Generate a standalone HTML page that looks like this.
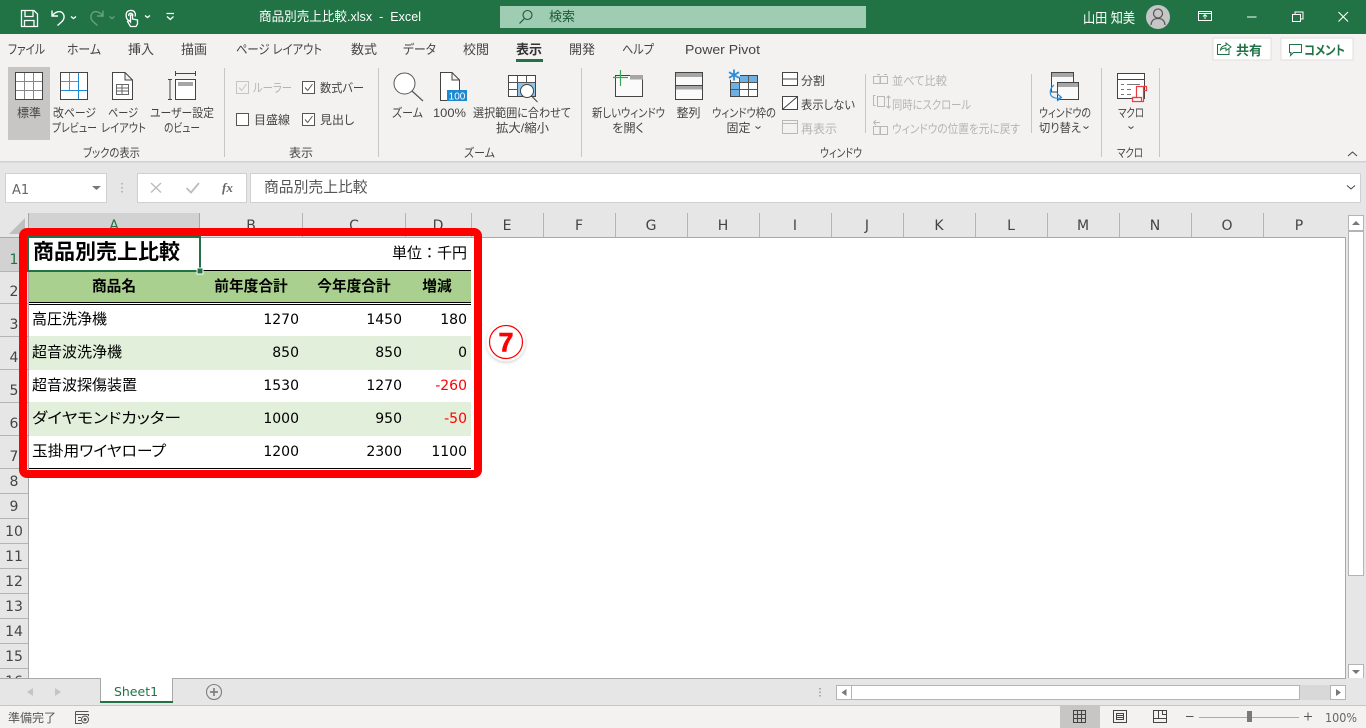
<!DOCTYPE html>
<html lang="ja"><head><meta charset="utf-8"><title>商品別売上比較.xlsx - Excel</title>
<style>
html,body{margin:0;padding:0;width:1366px;height:728px;overflow:hidden;background:#fff}
svg{display:block;position:absolute;left:0;top:0}
text{font-family:"Liberation Sans","Noto Sans CJK JP",sans-serif;font-feature-settings:"palt";fill:#444}
.j{font-size:12px}
.m{text-anchor:middle}
.e{text-anchor:end}
.t{font-size:13px;fill:#444}
.g{fill:#b4b4b4}
.hd{font-family:"DejaVu Sans","Noto Sans CJK JP",sans-serif;font-size:14px;fill:#444;text-anchor:middle}
.rn{font-family:"DejaVu Sans",sans-serif;font-size:14px;fill:#444;text-anchor:middle}
.n{font-family:"DejaVu Sans",sans-serif;font-size:14px;fill:#000;text-anchor:end}
.b{font-size:15px;fill:#000;font-feature-settings:"normal"}
.p{font-size:15px;fill:#000}
.h{font-size:14.7px;font-weight:bold;fill:#000;text-anchor:middle;font-feature-settings:"normal"}
.s{fill:none;stroke:#444;stroke-width:1}
.w{fill:none;stroke:#fff;stroke-width:1.3}
.lg{fill:none;stroke:#b8b8b8;stroke-width:1}
</style></head><body>
<svg width="1366" height="728" viewBox="0 0 1366 728" xmlns="http://www.w3.org/2000/svg">
<defs><filter id="gl" x="-40%" y="-40%" width="180%" height="180%"><feDropShadow dx="0" dy="1" stdDeviation="1.5" flood-color="#000" flood-opacity=".22"/></filter></defs>
<!-- backgrounds -->
<rect width="1366" height="728" fill="#e6e6e6"/>
<rect x="0" y="0" width="1366" height="34" fill="#217346"/>
<rect x="0" y="34" width="1366" height="127" fill="#f3f2f1"/>
<rect x="0" y="161" width="1366" height="1" fill="#d0d0d0"/><rect x="0" y="162" width="1366" height="1" fill="#dcdcdc"/>
<!-- title bar -->
<g class="w">
<path d="M21.5 10.5H34L37.5 14V26.5H21.5Z"/><path d="M25 10.5V16.5H33V10.5M24.5 26.5V20.5H34V26.5"/>
<path d="M52 10.5V16H58M52.5 15.5C55 12 59.5 10.5 62 12.5 65 15 64.5 19 62 21.5L57.5 25.5" stroke-width="1.4"/>
<path d="M71 16.5L73.5 18.5 76 16.5"/>
<g opacity=".32"><path d="M103 10.5V16H97M102.500 15.5C100 12 95.500 10.500 93 12.5 90 15 90.500 19 93 21.5L97.500 25.5" stroke-width="1.4"/><path d="M109.500 16.500L112 18.500 114.500 16.500"/></g>
<path d="M129 21C125 18 125 11 130 10.500 135 10 136 14 135 16.500M129 16C127.500 13 132.500 12 133 15.500M130.500 26.500L127.500 21.500 129 20.500 130.500 22V15H132.500V19L137.500 20V24L136 26.500Z"/>
<path d="M145 15.500L147.500 17.500 150 15.500"/>
<path d="M166.500 13.500H174M167 16.500L170.300 19.500 173.500 16.500"/>
</g>
<text x="259" y="21" class="t" style="fill:#fff;font-size:13px" xml:space="preserve" textLength="162" lengthAdjust="spacingAndGlyphs">商品別売上比較.xlsx  -  Excel</text>
<rect x="500" y="6" width="366" height="22" fill="#9fcdb3"/>
<circle cx="527.500" cy="15" r="4.500" fill="none" stroke="#1c5a38" stroke-width="1.1"/><path d="M524 19L519.500 23.500" stroke="#1c5a38" stroke-width="1.200"/>
<text x="549" y="21" style="font-size:13px;fill:#1c5a38">検索</text>
<text x="1083" y="23" style="font-size:14px;fill:#fff" xml:space="preserve" textLength="52" lengthAdjust="spacingAndGlyphs">山田 知美</text>
<circle cx="1158" cy="17" r="12" fill="#c6c6c6"/>
<circle cx="1158" cy="13.500" r="4.500" fill="none" stroke="#555" stroke-width="1.200"/><path d="M1151 25C1151.500 20 1154 18.500 1158 18.500 1162 18.500 1164.500 20 1165 25" fill="none" stroke="#555" stroke-width="1.200"/>
<g class="w" stroke-width="1">
<path d="M1198.500 11.500H1211.500V20.500H1198.500ZM1198.500 13.500H1211.500M1205 19V15M1203 16.500L1205 14.700 1207 16.500" style="stroke-width:1"/>
<path d="M1247 17H1256.500" style="stroke-width:1"/>
<path d="M1292.500 14.500H1300.500V21.500H1292.500ZM1295 14.500V12H1303V19H1300.500" style="stroke-width:1"/>
<path d="M1338.500 12L1348 21.500M1348 12L1338.500 21.500" style="stroke-width:1.100"/>
</g>
<!-- tabs -->
<g class="t">
<text x="8" y="54" class="t" textLength="37" lengthAdjust="spacingAndGlyphs">ファイル</text><text x="67" y="54" class="t" textLength="34" lengthAdjust="spacingAndGlyphs">ホーム</text><text x="128" y="54" class="t">挿入</text><text x="181" y="54" class="t">描画</text><text x="236" y="54" class="t" xml:space="preserve" textLength="86" lengthAdjust="spacingAndGlyphs">ページ レイアウト</text><text x="351" y="54" class="t">数式</text><text x="403" y="54" class="t" textLength="33" lengthAdjust="spacingAndGlyphs">データ</text><text x="463" y="54" class="t">校閲</text><text x="516" y="54" class="t" style="font-weight:bold;fill:#333">表示</text><text x="569" y="54" class="t">開発</text><text x="622" y="54" class="t" textLength="32" lengthAdjust="spacingAndGlyphs">ヘルプ</text><text x="685" y="54" class="t" textLength="75" lengthAdjust="spacingAndGlyphs">Power Pivot</text>
</g>
<rect x="516" y="59" width="27" height="3" fill="#217346"/>
<!-- share comment -->
<rect x="1213" y="38" width="58" height="22" fill="#fff" stroke="#e1dfdd" stroke-width="1"/>
<rect x="1281" y="38" width="72" height="22" fill="#fff" stroke="#e1dfdd" stroke-width="1"/>
<path d="M1221 44.500H1217.500V54.500H1229V49M1220.500 50C1221 46.500 1224 45.500 1226 45.500V43L1231 47 1226 50.500V48C1224 48 1222 48.500 1220.500 50Z" fill="none" stroke="#217346" stroke-width="1"/>
<text x="1236" y="55" style="font-size:13px;font-weight:bold;fill:#217346">共有</text>
<path d="M1289.500 44.500H1301.500V52.500H1293.500L1290.500 55.500 1291 52.500H1289.500Z" fill="none" stroke="#217346" stroke-width="1"/>
<text x="1304" y="55" style="font-size:13px;font-weight:bold;fill:#217346" textLength="41" lengthAdjust="spacingAndGlyphs">コメント</text>
<!-- separators -->
<g fill="#c8c6c4"><rect x="224" y="68" width="1" height="89"/><rect x="378" y="68" width="1" height="89"/><rect x="581" y="68" width="1" height="89"/><rect x="1101" y="68" width="1" height="89"/><rect x="1159" y="68" width="1" height="89"/><rect x="865" y="74" width="1" height="59"/><rect x="1031" y="74" width="1" height="59"/></g>
<!-- workbook views -->
<rect x="8" y="67" width="42" height="73" fill="#c8c6c4"/>
<path d="M15.500 72.500H42.500V99.500H15.500Z" fill="#fff" stroke="#444"/><path d="M24.500 73V99M33.500 73V99M16 81.500H42M16 90.500H42" stroke="#888" fill="none"/>
<path d="M60.500 72.500H87.500V99.500H60.500Z" fill="#fff" stroke="#444"/><path d="M69.500 73V90M61 81.500H78" stroke="#888" fill="none"/><path d="M78.500 73V99M61 90.500H87" stroke="#1e8ad6" fill="none"/>
<path d="M112.500 72.500H125L132.500 80V99.500H112.500ZM125 72.500V80H132.500" fill="#fff" stroke="#444"/><path d="M116.500 84.500H128.500V94.500H116.500ZM116.500 88H128.500M116.500 91H128.500M122 84.500V94.500" fill="none" stroke="#666"/>
<path d="M175.500 79.500H195.500V99.500H175.500Z" fill="#fff" stroke="#444"/><rect x="178" y="82" width="15" height="4" fill="#a6a6a6"/>
<path d="M175.500 73.500H195.500M175.500 71V76M195.500 71V76M170 79.500V99.500M168 79.500H172M168 99.500H172" fill="none" stroke="#444"/>
<g class="j"><text x="29" y="117" class="j m">標準</text><text x="74.500" y="117" class="j m" textLength="43" lengthAdjust="spacingAndGlyphs">改ページ</text><text x="74.500" y="132" class="j m" textLength="45" lengthAdjust="spacingAndGlyphs">プレビュー</text><text x="123" y="117" class="j m" textLength="30" lengthAdjust="spacingAndGlyphs">ページ</text><text x="123.500" y="132" class="j m" textLength="45" lengthAdjust="spacingAndGlyphs">レイアウト</text><text x="182" y="117" class="j m" textLength="64" lengthAdjust="spacingAndGlyphs">ユーザー設定</text><text x="182" y="132" class="j m" textLength="36" lengthAdjust="spacingAndGlyphs">のビュー</text><text x="111.500" y="157" class="j m" textLength="57" lengthAdjust="spacingAndGlyphs">ブックの表示</text></g>
<!-- show -->
<rect x="236.500" y="81.500" width="12" height="12" fill="none" stroke="#c4c4c4"/><path d="M239 87.500L241.700 90.500 246.500 84" fill="none" stroke="#c4c4c4"/>
<rect x="302.500" y="81.500" width="12" height="12" fill="#fff" stroke="#555"/><path d="M305 87.500L307.700 90.500 312.500 84" fill="none" stroke="#555"/>
<rect x="236.500" y="113.500" width="12" height="12" fill="#fff" stroke="#555"/>
<rect x="302.500" y="113.500" width="12" height="12" fill="#fff" stroke="#555"/><path d="M305 119.500L307.700 122.500 312.500 116" fill="none" stroke="#555"/>
<text x="253" y="92" class="j g" textLength="39" lengthAdjust="spacingAndGlyphs">ルーラー</text><text x="320" y="92" class="j" textLength="44" lengthAdjust="spacingAndGlyphs">数式バー</text><text x="254" y="124" class="j">目盛線</text><text x="320" y="124" class="j">見出し</text>
<text x="301" y="157" class="j m">表示</text>
<!-- zoom -->
<circle cx="404.500" cy="83.500" r="10.500" fill="#fff" stroke="#555"/><path d="M412 91L423 101" stroke="#555" fill="none" stroke-width="1.200"/>
<path d="M440.500 72.500H452L459.500 80V100.500H440.500ZM452 72.500V80H459.500" fill="#fff" stroke="#444"/>
<rect x="447" y="90" width="20" height="11" fill="#1e88d0"/><text x="457" y="99.500" class="m" style="font-size:10px;fill:#fff">100</text>
<text x="407.500" y="117" class="j m" textLength="31" lengthAdjust="spacingAndGlyphs">ズーム</text><text x="449.500" y="117" class="j m" textLength="33" lengthAdjust="spacingAndGlyphs">100%</text>
<path d="M508.500 75.500H535.500V96.500H508.500Z" fill="#fff" stroke="#444"/><rect x="517" y="83" width="18" height="13" fill="#8fc3ea"/><path d="M517.500 76V96M526.500 76V83M509 82.500H535M509 89.500H517" stroke="#555" fill="none"/>
<circle cx="527" cy="91" r="6.500" fill="#fff" stroke="#444"/><path d="M531.500 96L537.500 102" stroke="#444" fill="none"/>
<text x="522" y="117" class="j m" textLength="98" lengthAdjust="spacingAndGlyphs">選択範囲に合わせて</text><text x="522.500" y="132" class="j m" textLength="53" lengthAdjust="spacingAndGlyphs">拡大/縮小</text>
<text x="479.500" y="157" class="j m" textLength="31" lengthAdjust="spacingAndGlyphs">ズーム</text>
<!-- window -->
<path d="M615.500 75.500H642.500V96.500H615.500Z" fill="#fafafa" stroke="#444"/><rect x="630" y="75" width="13" height="4.500" fill="#a6a6a6"/>
<path d="M613 77.500H628M620.500 70V86" stroke="#3aa655" fill="none" stroke-width="1.200"/>
<text x="628.500" y="117" class="j m" textLength="73" lengthAdjust="spacingAndGlyphs">新しいウィンドウ</text><text x="628" y="132" class="j m" textLength="32" lengthAdjust="spacingAndGlyphs">を開く</text>
<path d="M675.500 72.500H702.500V99.500H675.500Z" fill="#fafafa" stroke="#444"/><rect x="676" y="73" width="26" height="4" fill="#a6a6a6"/><rect x="676" y="85" width="26" height="4.500" fill="#a6a6a6"/><path d="M676 85.500H702" stroke="#444"/>
<text x="688.500" y="117" class="j m">整列</text>
<path d="M730.500 75.500H757.500V96.500H730.500Z" fill="#fff" stroke="#444"/><rect x="739" y="76" width="18" height="6.500" fill="#6cb0e4"/><rect x="731" y="82.500" width="8" height="13.500" fill="#6cb0e4"/><path d="M739.500 76V96M748.500 76V96M731 82.500H757M731 89.500H757" stroke="#555" fill="none"/>
<circle cx="734" cy="75" r="6" fill="#f3f2f1"/>
<path d="M734 69.500V80.500M729 72.200L739 77.800M739 72.200L729 77.800" stroke="#2e8fd8" stroke-width="1.800" fill="none"/>
<text x="744" y="117" class="j m" textLength="64" lengthAdjust="spacingAndGlyphs">ウィンドウ枠の</text><text x="738.500" y="132" class="j m">固定</text><path d="M755.500 126.500L758 128.500 760.500 126.500" class="s"/>
<path d="M782.500 72.500H797.500V85.500H782.500ZM783 79H797" fill="#fff" stroke="#444"/>
<path d="M782.500 96.500H797.500V109.500H782.500ZM783 109L797 97" fill="#fff" stroke="#444"/>
<path d="M782.500 120.500H797.500V133.500H782.500ZM783 123.500H797" fill="none" stroke="#b8b8b8"/>
<text x="801" y="85" class="j">分割</text><text x="801" y="109" class="j" textLength="54" lengthAdjust="spacingAndGlyphs">表示しない</text><text x="801" y="133" class="j g">再表示</text>
<text x="841" y="157" class="j m" textLength="42" lengthAdjust="spacingAndGlyphs">ウィンドウ</text>
<path class="lg" d="M873.500 76.500H880V83.500H873.500ZM880.500 76.500H887.500V83.500H880.500ZM877 74.500H880M884 74.500H887"/>
<path class="lg" d="M875.500 95.500H873.500V105.500H875.500M877.500 96.500H884.500V106.500H877.500ZM888.500 96V108M886.500 98L888.500 96 890.500 98M886.500 106L888.500 108 890.500 106"/>
<path class="lg" d="M873.500 126.500H880V134.500H873.500ZM880.500 126.500H887.500V134.500H880.500ZM874 122.500H880M876 120L873.500 122.500 876 125"/>
<text x="892" y="85" class="j g" textLength="55" lengthAdjust="spacingAndGlyphs">並べて比較</text><text x="892" y="109" class="j g" textLength="79" lengthAdjust="spacingAndGlyphs">同時にスクロール</text><text x="892" y="133" class="j g" textLength="128" lengthAdjust="spacingAndGlyphs">ウィンドウの位置を元に戻す</text>
<path d="M1051.500 72.500H1073.500V92H1051.500Z" fill="#fafafa" stroke="#444"/><rect x="1052" y="73" width="21" height="4" fill="#a6a6a6"/>
<path d="M1057.500 82.500H1078.500V99.500H1057.500Z" fill="#fafafa" stroke="#444"/><rect x="1058" y="83" width="20" height="4" fill="#a6a6a6"/>
<path d="M1054 85C1049 89 1049 96 1054 97.500 1056 98.500 1059 98.500 1061 97.500M1057 93.500L1061.500 97.500 1057 101" fill="none" stroke="#2e8fd8" stroke-width="1.200"/>
<text x="1065" y="117" class="j m" textLength="52" lengthAdjust="spacingAndGlyphs">ウィンドウの</text><text x="1060" y="132" class="j m" textLength="42" lengthAdjust="spacingAndGlyphs">切り替え</text><path d="M1083.500 126.500L1086 128.500 1088.500 126.500" class="s"/>
<path d="M1117.500 73.500H1144.500V98.500H1117.500Z" fill="#fff" stroke="#444"/><path d="M1118 79.500H1144" stroke="#444"/>
<path d="M1121 84.500H1124M1127 84.500H1140M1121 89.500H1124M1127 89.500H1131M1121 94.500H1124M1127 94.500H1131" stroke="#777" fill="none"/>
<path d="M1136.500 86.500H1143.500V101.500H1132.500V97.500H1136.500Z" fill="#fff" stroke="#ef3b3b" stroke-width="1.200"/>
<path d="M1143.500 86.500H1146.500V90.500H1143.500M1132.500 97.500H1141.500V101.500" fill="none" stroke="#ef3b3b" stroke-width="1.200"/>
<text x="1131" y="117" class="j m" textLength="26" lengthAdjust="spacingAndGlyphs">マクロ</text><path d="M1128.500 126.500L1131 128.500 1133.500 126.500" class="s"/>
<text x="1130" y="157" class="j m" textLength="26" lengthAdjust="spacingAndGlyphs">マクロ</text>
<path d="M1348 156L1352.500 152 1357 156" class="s"/>
<!-- formula bar -->
<rect x="5.500" y="173.500" width="101" height="29" fill="#fff" stroke="#d0d0d0"/>
<text x="12" y="194" style="font-family:'DejaVu Sans',sans-serif;font-size:13px;fill:#666">A1</text>
<path d="M92 186H101L96.500 190Z" fill="#777"/>
<path d="M122 183V184.500M122 187V188.500M122 191V192.500" stroke="#aaa" stroke-width="1.500"/>
<rect x="137.500" y="173.500" width="109" height="29" fill="#fff" stroke="#d0d0d0"/>
<rect x="250.500" y="173.500" width="1110" height="29" fill="#fff" stroke="#d0d0d0"/>
<path d="M151 183L161 192.500M161 183L151 192.500" stroke="#bdbdbd" stroke-width="1.500" fill="none"/>
<path d="M186.500 188L191 192.500 199 183" stroke="#bdbdbd" stroke-width="1.800" fill="none"/>
<text x="222" y="192" style="font-family:'Liberation Serif',serif;font-style:italic;font-weight:bold;font-size:13px;fill:#666">fx</text>
<text x="264" y="192" style="font-size:14.800px;fill:#555;font-feature-settings:normal">商品別売上比較</text>
<path d="M1347 185.500L1351 189 1355 185.500" class="s"/>
<!-- headers -->
<rect x="0" y="213" width="1366" height="25" fill="#e6e6e6"/>
<rect x="29" y="213" width="171" height="24" fill="#d2d2d2"/>
<rect x="0" y="237" width="28" height="34" fill="#d2d2d2"/>
<rect x="0" y="271" width="28" height="407" fill="#e6e6e6"/>
<path d="M9 234L25 218V234Z" fill="#bfbfbf"/>
<g fill="#b4b4b4">
<rect x="28" y="213" width="1" height="465" fill="#a8a8a8"/>
<rect x="199" y="213" width="1" height="24" fill="#a8a8a8"/><rect x="302" y="213" width="1" height="24"/><rect x="405" y="213" width="1" height="24"/><rect x="471" y="213" width="1" height="24"/><rect x="543" y="213" width="1" height="24"/><rect x="615" y="213" width="1" height="24"/><rect x="687" y="213" width="1" height="24"/><rect x="759" y="213" width="1" height="24"/><rect x="831" y="213" width="1" height="24"/><rect x="903" y="213" width="1" height="24"/><rect x="975" y="213" width="1" height="24"/><rect x="1047" y="213" width="1" height="24"/><rect x="1119" y="213" width="1" height="24"/><rect x="1191" y="213" width="1" height="24"/><rect x="1263" y="213" width="1" height="24"/>
<rect x="0" y="271" width="28" height="1"/><rect x="0" y="303" width="28" height="1"/><rect x="0" y="336" width="28" height="1"/><rect x="0" y="369" width="28" height="1"/><rect x="0" y="402" width="28" height="1"/><rect x="0" y="435" width="28" height="1"/><rect x="0" y="468" width="28" height="1"/><rect x="0" y="493" width="28" height="1"/><rect x="0" y="518" width="28" height="1"/><rect x="0" y="543" width="28" height="1"/><rect x="0" y="568" width="28" height="1"/><rect x="0" y="593" width="28" height="1"/><rect x="0" y="618" width="28" height="1"/><rect x="0" y="643" width="28" height="1"/><rect x="0" y="668" width="28" height="1"/>
</g>
<rect x="0" y="237" width="1346" height="1" fill="#a8a8a8"/>
<text x="114" y="230" class="hd" style="fill:#217346">A</text><text x="251" y="230" class="hd">B</text><text x="354" y="230" class="hd">C</text><text x="438" y="230" class="hd">D</text><text x="507" y="230" class="hd">E</text><text x="579" y="230" class="hd">F</text><text x="651" y="230" class="hd">G</text><text x="723" y="230" class="hd">H</text><text x="795" y="230" class="hd">I</text><text x="867" y="230" class="hd">J</text><text x="939" y="230" class="hd">K</text><text x="1011" y="230" class="hd">L</text><text x="1083" y="230" class="hd">M</text><text x="1155" y="230" class="hd">N</text><text x="1227" y="230" class="hd">O</text><text x="1299" y="230" class="hd">P</text>
<text x="14" y="264" class="rn" style="fill:#217346">1</text><text x="14" y="296" class="rn">2</text><text x="14" y="329" class="rn">3</text><text x="14" y="362" class="rn">4</text><text x="14" y="395" class="rn">5</text><text x="14" y="428" class="rn">6</text><text x="14" y="461" class="rn">7</text><text x="14" y="486" class="rn">8</text><text x="14" y="511" class="rn">9</text><text x="14" y="536" class="rn">10</text><text x="14" y="561" class="rn">11</text><text x="14" y="586" class="rn">12</text><text x="14" y="611" class="rn">13</text><text x="14" y="636" class="rn">14</text><text x="14" y="661" class="rn">15</text>
<text x="14" y="686" class="rn" clip-path="url(#c16)">16</text>
<clipPath id="c16"><rect x="0" y="668" width="28" height="10"/></clipPath>
<!-- sheet -->
<rect x="29" y="238" width="1317" height="440" fill="#fff"/>
<rect x="29" y="270" width="442" height="32" fill="#a9d08e"/>
<rect x="29" y="270" width="442" height="1" fill="#000"/><rect x="29" y="302" width="442" height="1" fill="#000"/><rect x="29" y="304" width="442" height="1" fill="#000"/>
<rect x="29" y="336" width="442" height="34" fill="#e2efda"/><rect x="29" y="402" width="442" height="34" fill="#e2efda"/>
<rect x="29" y="468" width="442" height="1" fill="#000"/>
<text x="33" y="259" style="font-size:21px;font-weight:bold;fill:#000;font-feature-settings:normal">商品別売上比較</text>
<text x="467" y="258" class="e" style="font-size:15px;fill:#000;font-feature-settings:normal">単位：千円</text>
<text x="114" y="291" class="h">商品名</text><text x="251" y="291" class="h">前年度合計</text><text x="354" y="291" class="h">今年度合計</text><text x="437" y="291" class="h">増減</text>
<text x="32" y="324" class="b">高圧洗浄機</text><text x="32" y="357" class="b">超音波洗浄機</text><text x="32" y="390" class="b">超音波探傷装置</text><text x="32" y="423" class="p" textLength="149" lengthAdjust="spacingAndGlyphs">ダイヤモンドカッター</text><text x="32" y="456" class="p" textLength="134" lengthAdjust="spacingAndGlyphs">玉掛用ワイヤロープ</text>
<text x="299" y="324" class="n">1270</text><text x="402" y="324" class="n">1450</text><text x="467" y="324" class="n">180</text>
<text x="299" y="357" class="n">850</text><text x="402" y="357" class="n">850</text><text x="467" y="357" class="n">0</text>
<text x="299" y="390" class="n">1530</text><text x="402" y="390" class="n">1270</text><text x="467" y="390" class="n" style="fill:#f00">-260</text>
<text x="299" y="423" class="n">1000</text><text x="402" y="423" class="n">950</text><text x="467" y="423" class="n" style="fill:#f00">-50</text>
<text x="299" y="456" class="n">1200</text><text x="402" y="456" class="n">2300</text><text x="467" y="456" class="n">1100</text>
<!-- selection -->
<rect x="28" y="237" width="172" height="34" fill="none" stroke="#217346" stroke-width="2"/>
<rect x="197" y="268" width="6" height="6" fill="#217346" stroke="#fff" stroke-width="1"/>
<!-- red frame -->
<rect x="23" y="232" width="455" height="242" rx="4" fill="none" stroke="#f00" stroke-width="8"/>
<!-- badge -->
<circle cx="506" cy="342" r="19.500" fill="#fff" filter="url(#gl)"/>
<circle cx="506" cy="342" r="16.500" fill="#fff" stroke="#f00" stroke-width="1.200"/>
<text x="506" y="351.500" class="m" style="font-size:27px;font-weight:bold;fill:#f00;stroke:#f00;stroke-width:.6">7</text>
<!-- vertical scrollbar -->
<rect x="1346" y="213" width="20" height="465" fill="#e6e6e6"/><rect x="1345" y="238" width="1" height="440" fill="#a8a8a8"/>
<rect x="1348.500" y="215.500" width="15" height="15" fill="#fff" stroke="#b4b4b4"/><path d="M1352 225L1356 221 1360 225Z" fill="#777"/>
<rect x="1348.500" y="231.500" width="15" height="344" fill="#fff" stroke="#b4b4b4"/>
<rect x="1348.500" y="664.500" width="15" height="14" fill="#fff" stroke="#b4b4b4"/><path d="M1352 670H1360L1356 674Z" fill="#777"/>
<!-- tab bar -->
<rect x="0" y="678" width="1366" height="28" fill="#e6e6e6"/>
<rect x="0" y="678" width="1346" height="1" fill="#a8a8a8"/>
<path d="M33 688V696L27 692Z" fill="#c4c4c4"/><path d="M55 688V696L61 692Z" fill="#c4c4c4"/>
<rect x="100" y="678" width="73" height="25" fill="#fff"/>
<path d="M100.500 678V703M172.500 678V703" stroke="#a8a8a8"/>
<rect x="100" y="701" width="73" height="2" fill="#217346"/>
<text x="136" y="696" class="m" style="font-family:'DejaVu Sans',sans-serif;font-size:12.500px;fill:#217346">Sheet1</text>
<circle cx="214" cy="692" r="7.500" fill="none" stroke="#808080" stroke-width="1.100"/><path d="M210 692H218M214 688V696" stroke="#808080" stroke-width="1.700"/>
<path d="M820 688V689.500M820 691.500V693M820 695V696.500" stroke="#999" stroke-width="1.500"/>
<rect x="836.500" y="685.500" width="15" height="14" fill="#fff" stroke="#b4b4b4"/><path d="M846.500 689V696L841.500 692.500Z" fill="#777"/>
<rect x="851.500" y="685.500" width="448" height="14" fill="#fff" stroke="#b4b4b4"/>
<rect x="1300" y="685" width="31" height="15" fill="#d8d8d8"/>
<rect x="1330.500" y="685.500" width="15" height="14" fill="#fff" stroke="#b4b4b4"/><path d="M1336 689V696L1341 692.500Z" fill="#777"/>
<!-- status bar -->
<rect x="0" y="705" width="1366" height="1" fill="#c6c6c6"/>
<rect x="0" y="706" width="1366" height="22" fill="#f3f2f1"/>
<text x="8" y="722" style="font-size:12px;fill:#555">準備完了</text>
<path d="M75.500 711.500H88.500M75.500 711.500V723.500H82M75.500 714.500H88.500V716M78 717.500H81M78 720.500H81" fill="none" stroke="#555"/><circle cx="85" cy="719.500" r="3.500" fill="none" stroke="#555"/><circle cx="85" cy="719.500" r="1.500" fill="#555"/>
<rect x="1060" y="706" width="40" height="22" fill="#c8c6c4"/>
<path d="M1073.500 710.500H1085.500V722.500H1073.500ZM1077.500 711V722M1081.500 711V722M1074 714.500H1085M1074 718.500H1085" fill="none" stroke="#444"/>
<path d="M1113.500 710.500H1126.500V722.500H1113.500ZM1116.500 713.500H1123.500V719.500H1116.500ZM1117 715.500H1123M1117 717.500H1123" fill="none" stroke="#444"/>
<path d="M1153.500 710.500H1166.500V722.500H1153.500ZM1153.500 718.500H1166.500M1158.500 711V718M1162.500 711V714.500H1166" fill="none" stroke="#444"/>
<path d="M1186 716.500H1193.500" stroke="#555"/>
<path d="M1199 717.500H1299" stroke="#aaa"/>
<rect x="1247" y="711" width="5" height="11" fill="#7a7a7a"/>
<path d="M1304 716.500H1312M1308 712.500V720.500" stroke="#555"/>
<text x="1325" y="722" style="font-family:'DejaVu Sans',sans-serif;font-size:12px;fill:#666" textLength="32" lengthAdjust="spacingAndGlyphs">100%</text>
</svg>
</body></html>
